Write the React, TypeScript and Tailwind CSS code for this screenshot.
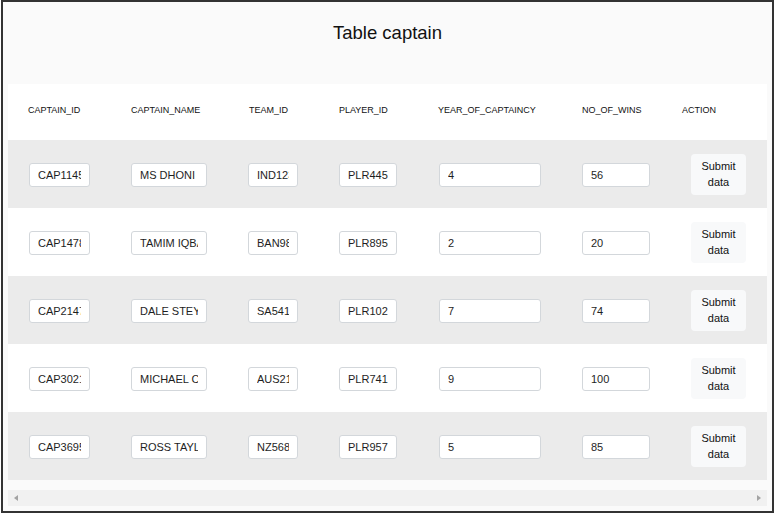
import React from 'react';

const captains = [
  { id: 'CAP1145', name: 'MS DHONI', team: 'IND123', player: 'PLR445', years: '4', wins: '56' },
  { id: 'CAP1478', name: 'TAMIM IQBAL', team: 'BAN987', player: 'PLR895', years: '2', wins: '20' },
  { id: 'CAP2147', name: 'DALE STEYN', team: 'SA5412', player: 'PLR102', years: '7', wins: '74' },
  { id: 'CAP3021', name: 'MICHAEL CLARKE', team: 'AUS213', player: 'PLR741', years: '9', wins: '100' },
  { id: 'CAP3695', name: 'ROSS TAYLOR', team: 'NZ5689', player: 'PLR957', years: '5', wins: '85' },
];

const inputCls =
  'h-[24px] rounded-[3px] border border-[#d3d7db] bg-white pl-[8px] pr-[8px] text-[11px] text-[#1e1e1e] outline-none';

const App: React.FC = () => {
  return (
    <div
      className="w-[777px] h-[517px] bg-white pl-[1px]"
      style={{ fontFamily: '"Liberation Sans", Arial, sans-serif' }}
    >
      <div className="w-[773px] h-[513px] border-2 border-[#333] bg-[#fafafa] flex flex-col">
        <div className="h-[82px] pt-[20px] text-center text-[18.5px] leading-[21px] text-[#111]">
          Table captain
        </div>

        <div className="px-[5px]">
          <div className="w-[759px]">
            {/* header */}
            <div className="flex h-[56px] items-center bg-white pb-[2px] text-[9px] text-[#111]">
              <div className="w-[103px] pl-[20px]">CAPTAIN_ID</div>
              <div className="w-[117px] pl-[20px]">CAPTAIN_NAME</div>
              <div className="w-[90px] pl-[21px]">TEAM_ID</div>
              <div className="w-[100px] pl-[21px]">PLAYER_ID</div>
              <div className="w-[143px] pl-[20px]">YEAR_OF_CAPTAINCY</div>
              <div className="w-[100px] pl-[21px]">NO_OF_WINS</div>
              <div className="w-[106px] pl-[21px]">ACTION</div>
            </div>

            {captains.map((c, i) => (
              <div
                key={c.id}
                className={`flex h-[68px] items-center ${i % 2 === 0 ? 'bg-[#ebebeb]' : 'bg-white'}`}
              >
                <div className="w-[103px] pl-[21px]">
                  <input className={`${inputCls} w-[61px]`} defaultValue={c.id} />
                </div>
                <div className="w-[117px] pl-[20px]">
                  <input className={`${inputCls} w-[76px]`} defaultValue={c.name} />
                </div>
                <div className="w-[90px] pl-[20px]">
                  <input className={`${inputCls} w-[50px]`} defaultValue={c.team} />
                </div>
                <div className="w-[100px] pl-[21px]">
                  <input className={`${inputCls} w-[58px]`} defaultValue={c.player} />
                </div>
                <div className="w-[143px] pl-[21px]">
                  <input className={`${inputCls} w-[102px]`} defaultValue={c.years} />
                </div>
                <div className="w-[100px] pl-[21px]">
                  <input className={`${inputCls} w-[68px]`} defaultValue={c.wins} />
                </div>
                <div className="w-[106px] pl-[30px]">
                  <button className="w-[55px] h-[41px] rounded-[4px] bg-[#f8f9fa] text-[11px] leading-[16px] text-[#111]">
                    Submit
                    <br />
                    data
                  </button>
                </div>
              </div>
            ))}
          </div>

          {/* horizontal scrollbar */}
          <div className="mt-[10px] flex h-[16px] w-[759px] items-center justify-between bg-[#f1f1f1] px-[6px]">
            <span className="h-0 w-0 border-y-[3.5px] border-r-[4px] border-y-transparent border-r-[#a3a3a3]" />
            <span className="h-0 w-0 border-y-[3.5px] border-l-[4px] border-y-transparent border-l-[#a3a3a3]" />
          </div>
        </div>
      </div>
    </div>
  );
};

export default App;
